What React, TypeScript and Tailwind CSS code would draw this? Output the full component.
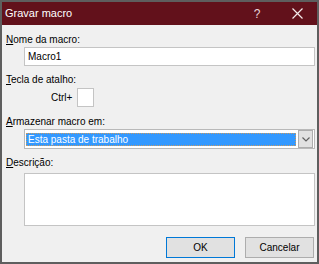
import React from 'react'

const font = { fontFamily: '"Liberation Sans", Arial, sans-serif' }

function Label({ first, rest }: { first: string; rest: string }) {
  return (
    <div className="text-[10px] leading-[14px] text-black">
      <span className="underline underline-offset-1">{first}</span>
      {rest}
    </div>
  )
}

export default function App() {
  return (
    <div
      className="w-[319px] h-[264px] bg-[#f0f0f0] border-2 border-[#5e5e5e] flex flex-col overflow-hidden"
      style={font}
    >
      <div className="h-[23px] bg-[#62111b] flex items-center text-white text-[11px] shrink-0">
        <span className="pl-[3px] flex-1">Gravar macro</span>
        <span className="w-[40px] text-center text-[12px] text-[#e8d8da]">?</span>
        <span className="w-[40px] flex justify-center">
          <svg width="11" height="11" viewBox="0 0 11 11">
            <path d="M0.5 0.5 L10.5 10.5 M10.5 0.5 L0.5 10.5" stroke="#f4eaea" strokeWidth="1.2" />
          </svg>
        </span>
      </div>

      <div className="flex flex-col pl-[4px] pr-[2px]">
        <div className="mt-[8px]">
          <Label first="N" rest="ome da macro:" />
        </div>
        <div className="ml-[18px] h-[19px] bg-white border border-[#c4c4c4] flex items-center pl-[3px] text-[10px]">
          Macro1
        </div>

        <div className="mt-[7px]">
          <Label first="T" rest="ecla de atalho:" />
        </div>
        <div className="mt-[1px] flex items-center">
          <span className="ml-[45px] w-[26px] text-[10px]">Ctrl+</span>
          <div className="w-[17px] h-[19px] bg-white border border-[#c4c4c4]" />
        </div>

        <div className="mt-[8px]">
          <Label first="A" rest="rmazenar macro em:" />
        </div>
        <div className="ml-[18px] h-[20px] bg-white border border-[#b9b9b9] flex items-center pl-[1px] pr-[1px]">
          <div className="flex-1 h-[13px] bg-[#3399ff] border border-dotted border-[#c89a62] text-white text-[10px] leading-[11px] pl-[1px]">
            Esta pasta de trabalho
          </div>
          <div className="ml-[2px] w-[15px] h-[18px] bg-[#e1e1e1] border border-[#adadad] flex items-center justify-center">
            <svg width="8" height="5" viewBox="0 0 8 5">
              <path d="M0.5 0.5 L4 4 L7.5 0.5" stroke="#606060" strokeWidth="1.2" fill="none" />
            </svg>
          </div>
        </div>

        <div className="mt-[7px]">
          <Label first="D" rest="escrição:" />
        </div>
        <div className="mt-[3px] ml-[18px] h-[53px] bg-white border border-[#c4c4c4]" />

        <div className="mt-[11px] flex justify-end gap-[10px] pr-[1px]">
          <button className="w-[69px] h-[21px] bg-[#e1e1e1] border border-[#0078d7] text-[10px] leading-none">
            OK
          </button>
          <button className="w-[69px] h-[21px] bg-[#e1e1e1] border border-[#adadad] text-[10px] leading-none">
            Cancelar
          </button>
        </div>
      </div>
    </div>
  )
}
